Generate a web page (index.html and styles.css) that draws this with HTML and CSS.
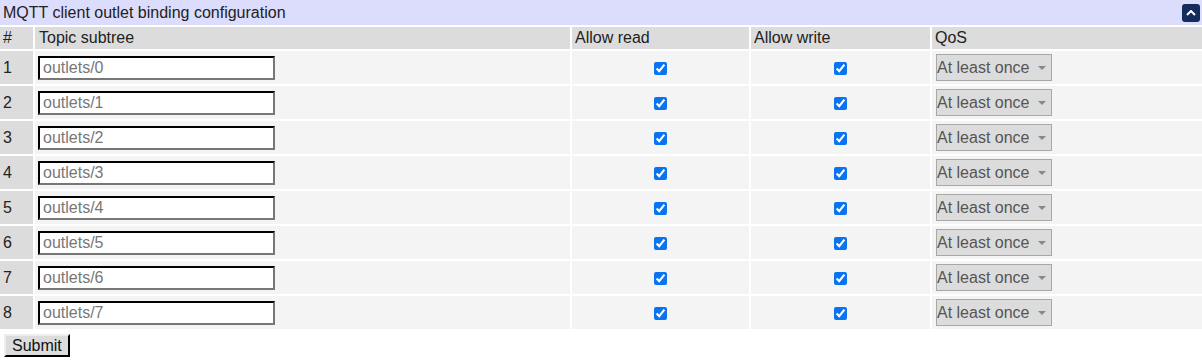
FILE: index.html
```html
<!DOCTYPE html>
<html>
<head>
<meta charset="utf-8">
<link rel="stylesheet" href="styles.css">
</head>
<body>
<form class="form">
  <div class="title">
    <span class="title-text">MQTT client outlet binding configuration</span>
    <button type="button" class="collapse" aria-label="collapse">
      <svg width="10" height="6" viewBox="0 0 10 6"><path d="M1 5 L5 1 L9 5" fill="none" stroke="#fff" stroke-width="2"/></svg>
    </button>
  </div>
  <table class="grid">
    <colgroup>
      <col class="c-num"><col class="c-topic"><col class="c-read"><col class="c-write"><col class="c-qos">
    </colgroup>
    <thead>
      <tr><th>#</th><th>Topic subtree</th><th>Allow read</th><th>Allow write</th><th>QoS</th></tr>
    </thead>
    <tbody>
      <tr><td class="num">1</td><td><input class="topic" type="text" placeholder="outlets/0"></td><td class="chk"><input type="checkbox" checked></td><td class="chk"><input type="checkbox" checked></td><td><div class="sel">At least once<span class="arrow"></span></div></td></tr>
      <tr><td class="num">2</td><td><input class="topic" type="text" placeholder="outlets/1"></td><td class="chk"><input type="checkbox" checked></td><td class="chk"><input type="checkbox" checked></td><td><div class="sel">At least once<span class="arrow"></span></div></td></tr>
      <tr><td class="num">3</td><td><input class="topic" type="text" placeholder="outlets/2"></td><td class="chk"><input type="checkbox" checked></td><td class="chk"><input type="checkbox" checked></td><td><div class="sel">At least once<span class="arrow"></span></div></td></tr>
      <tr><td class="num">4</td><td><input class="topic" type="text" placeholder="outlets/3"></td><td class="chk"><input type="checkbox" checked></td><td class="chk"><input type="checkbox" checked></td><td><div class="sel">At least once<span class="arrow"></span></div></td></tr>
      <tr><td class="num">5</td><td><input class="topic" type="text" placeholder="outlets/4"></td><td class="chk"><input type="checkbox" checked></td><td class="chk"><input type="checkbox" checked></td><td><div class="sel">At least once<span class="arrow"></span></div></td></tr>
      <tr><td class="num">6</td><td><input class="topic" type="text" placeholder="outlets/5"></td><td class="chk"><input type="checkbox" checked></td><td class="chk"><input type="checkbox" checked></td><td><div class="sel">At least once<span class="arrow"></span></div></td></tr>
      <tr><td class="num">7</td><td><input class="topic" type="text" placeholder="outlets/6"></td><td class="chk"><input type="checkbox" checked></td><td class="chk"><input type="checkbox" checked></td><td><div class="sel">At least once<span class="arrow"></span></div></td></tr>
      <tr><td class="num">8</td><td><input class="topic" type="text" placeholder="outlets/7"></td><td class="chk"><input type="checkbox" checked></td><td class="chk"><input type="checkbox" checked></td><td><div class="sel">At least once<span class="arrow"></span></div></td></tr>
    </tbody>
  </table>
  <button type="button" class="submit">Submit</button>
</form>
</body>
</html>
```

FILE: styles.css
```css
html, body {
  margin: 0;
  padding: 0;
  background: #fff;
  font-family: "Liberation Sans", Arial, sans-serif;
  font-size: 16px;
  color: #222;
}
.form {
  margin: 0;
}
.title {
  display: flex;
  align-items: center;
  justify-content: space-between;
  height: 25px;
  background: #dcdcfc;
  padding: 0 2px 0 3px;
  box-sizing: border-box;
}
.title-text {
  line-height: 25px;
}
.collapse {
  width: 18px;
  height: 18px;
  margin: 0;
  padding: 0;
  border: none;
  border-radius: 3px;
  background: #142c5c;
  display: flex;
  align-items: center;
  justify-content: center;
}
.grid {
  border-collapse: separate;
  border-spacing: 2px;
  margin: 0 -2px;
  width: calc(100% + 4px);
  table-layout: fixed;
}
.c-num { width: 33px; }
.c-topic { width: 535px; }
.c-read { width: 177px; }
.c-write { width: 179px; }
.grid th {
  background: #dcdcdc;
  font-weight: normal;
  text-align: left;
  height: 22px;
  padding: 0 3px;
  line-height: 22px;
}
.grid th:nth-child(2) { padding-left: 4px; }
.grid td {
  background: #f4f4f4;
  height: 33px;
  padding: 0 3px;
  vertical-align: middle;
}
.grid td.num {
  background: #dcdcdc;
}
.grid td.chk {
  text-align: center;
  padding: 0;
}
.chk input {
  margin: 0;
  width: 13px;
  height: 13px;
  vertical-align: middle;
  accent-color: #0a74f0;
}
.topic {
  width: 237px;
  height: 24px;
  box-sizing: border-box;
  border: 2px inset #767676;
  border-color: #222 #777 #777 #222;
  margin: 0;
  padding: 0 3px;
  font-family: "Liberation Sans", Arial, sans-serif;
  font-size: 16px;
  background: #fff;
  display: block;
}
.topic::placeholder {
  color: #777;
}
.sel {
  width: 116px;
  height: 27px;
  box-sizing: border-box;
  margin-left: 1px;
  background: #dcdcdc;
  border: 1px solid #a8a8a8;
  color: #555;
  display: flex;
  align-items: center;
  padding-left: 0;
  line-height: 25px;
}
.arrow {
  width: 0;
  height: 0;
  border-left: 4px solid transparent;
  border-right: 4px solid transparent;
  border-top: 4px solid #888;
  margin-left: 8px;
}
.submit {
  margin: 3px 0 0 4px;
  height: 23px;
  padding: 0 6px;
  font-family: "Liberation Sans", Arial, sans-serif;
  font-size: 16px;
  color: #111;
  background: #dcdcdc;
  border: 2px outset #999;
  border-color: #eee #333 #333 #eee;
  line-height: 19px;
}
```
